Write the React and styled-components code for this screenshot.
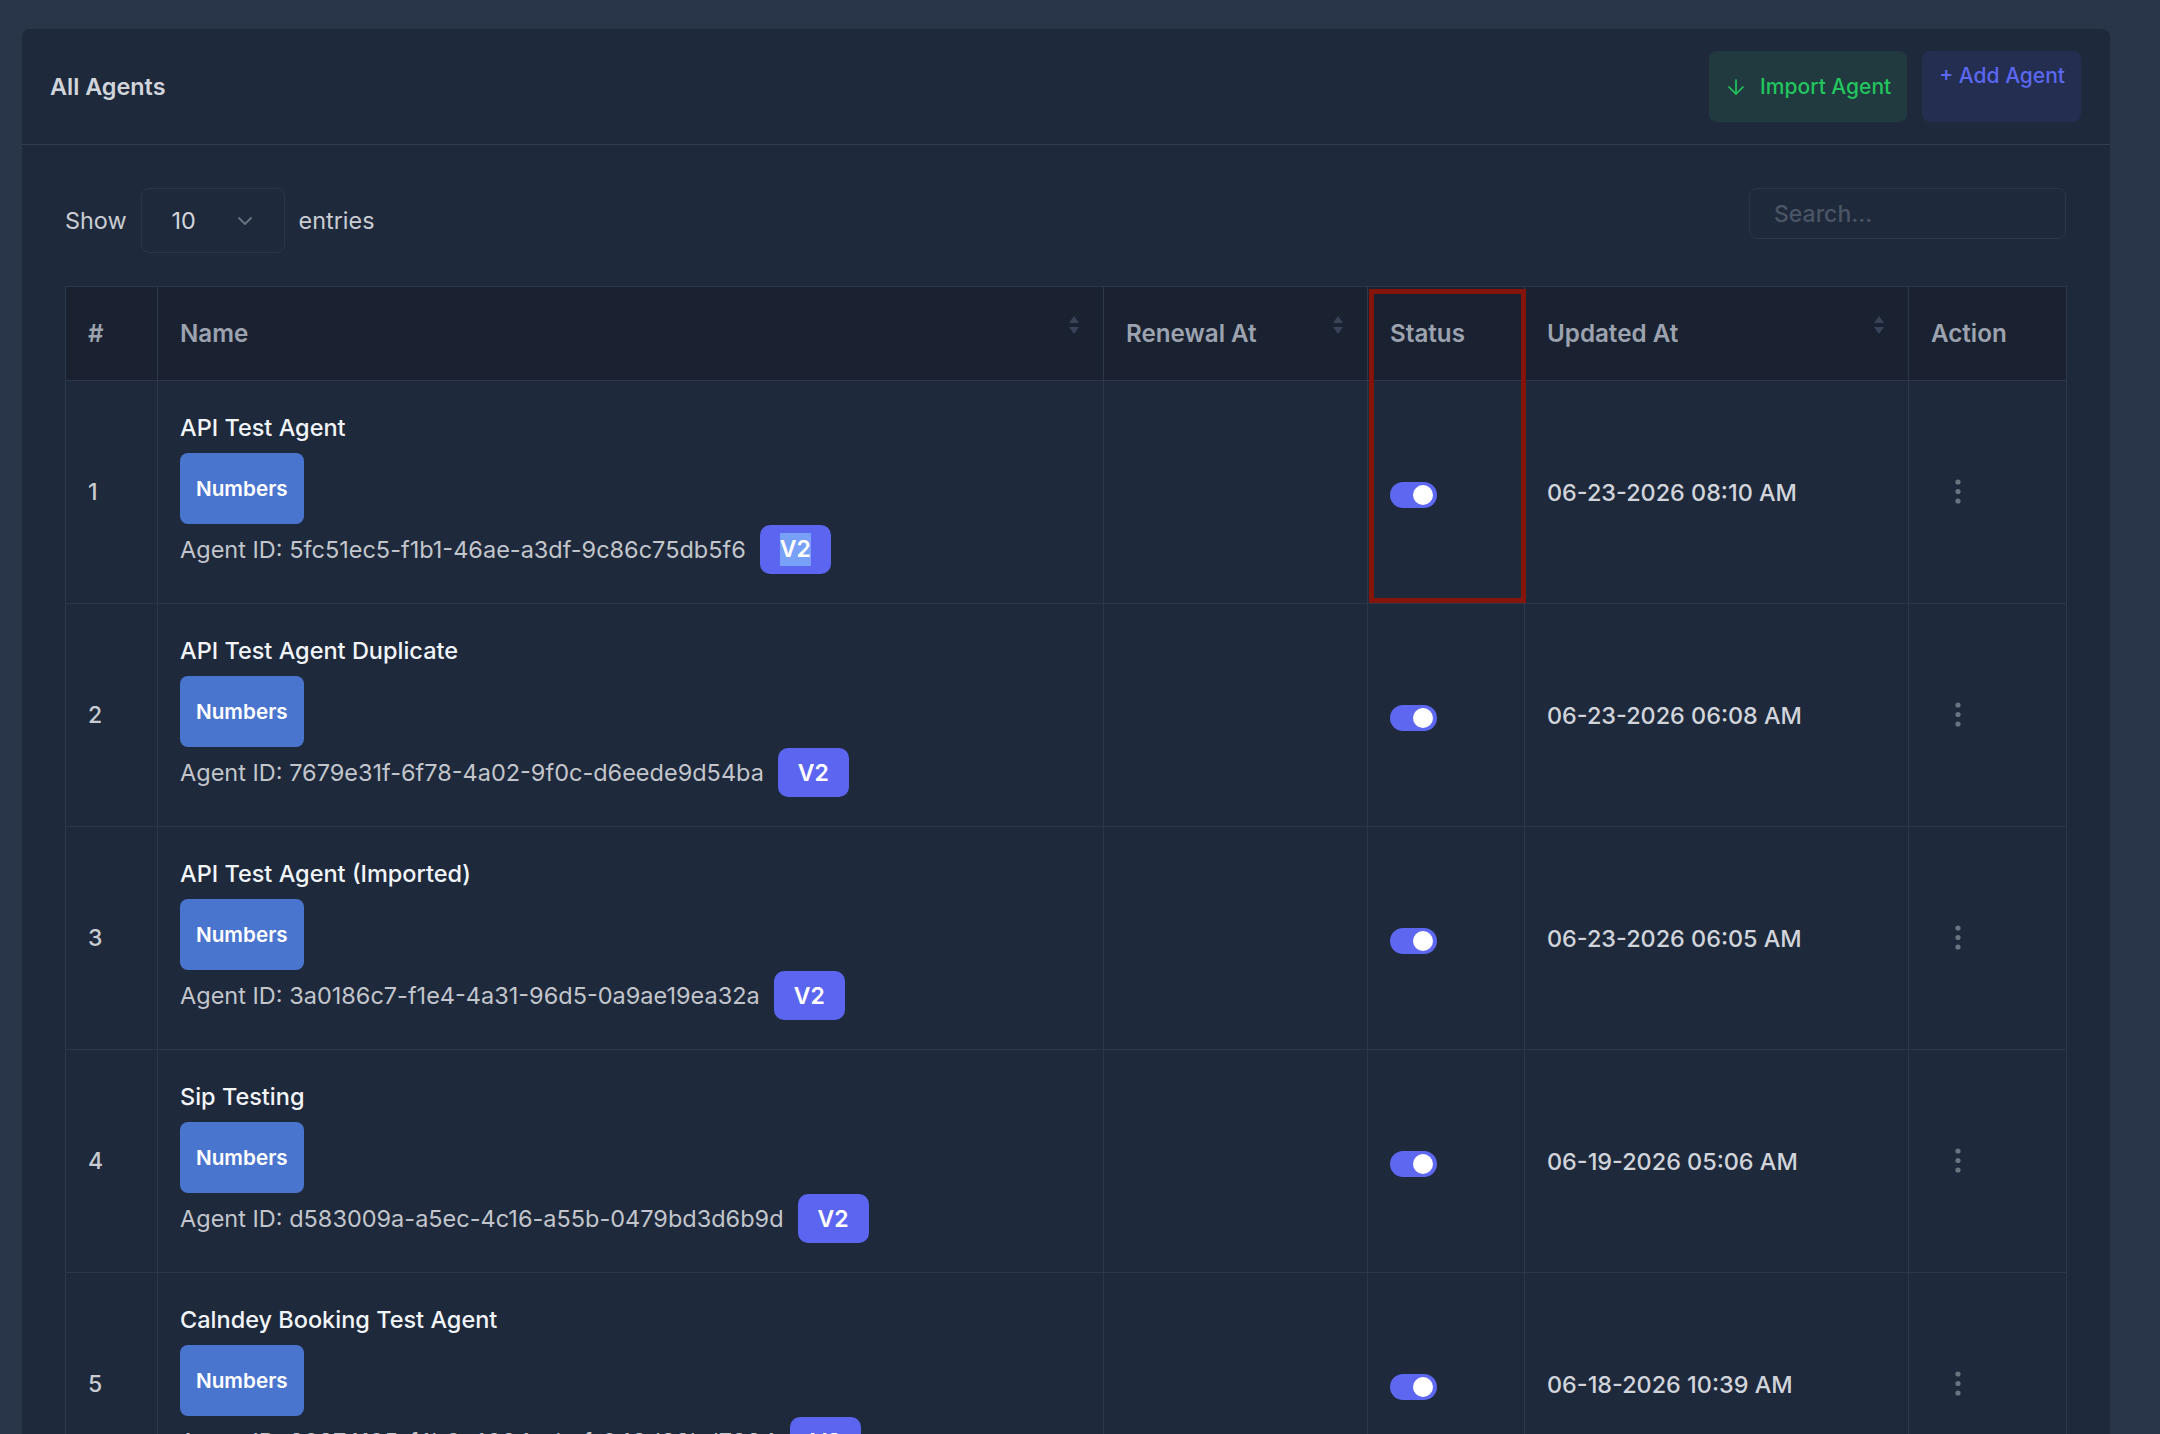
import React from 'react';
import styled, { createGlobalStyle } from 'styled-components';
import { ArrowDown } from 'lucide-react';

const Global = createGlobalStyle`
  html, body { margin: 0; padding: 0; background: #293548; }
  body { font-family: Inter, "Noto Sans", sans-serif; -webkit-font-smoothing: antialiased; }
  * { box-sizing: border-box; }
`;

const Page = styled.div`
  min-height: 100vh;
  padding: 29px 50px 0 22px;
  overflow: hidden;
`;

const Card = styled.section`
  background: #1e293b;
  border-radius: 8px 8px 0 0;
  min-height: 1500px;
`;

const CardHeader = styled.header`
  display: flex;
  align-items: stretch;
  justify-content: space-between;
  padding: 22px 29px 22px 28px;
  border-bottom: 1px solid #323d50;
`;

const Title = styled.h2`
  margin: 0;
  align-self: center;
  font-size: 23.4px;
  font-weight: 600;
  color: #d1d5db;
`;

const Actions = styled.div`
  display: flex;
  align-items: stretch;
  gap: 15px;
`;

const ActionButton = styled.button`
  display: flex;
  align-items: ${(p) => (p.$top ? 'flex-start' : 'center')};
  gap: 12px;
  border: 0;
  border-radius: 8px;
  font-family: inherit;
  font-size: 21px;
  font-weight: 500;
  line-height: 33px;
  padding: ${(p) => (p.$top ? '8px 16px 0 17px' : '19px 16px 19px 15px')};
  background: ${(p) => p.$bg};
  color: ${(p) => p.$fg};
  cursor: pointer;
`;

const Body = styled.div`
  padding: 43px 44px 0 43px;
`;

const Toolbar = styled.div`
  display: flex;
  align-items: flex-start;
  justify-content: space-between;
  margin-bottom: 33px;
`;

const Length = styled.label`
  display: flex;
  align-items: center;
  gap: 14px;
  font-size: 23.4px;
  color: #c9cdd3;
`;

const Select = styled.div`
  width: 144px;
  height: 65px;
  display: flex;
  align-items: center;
  justify-content: space-between;
  padding: 0 31px 0 30px;
  border: 1px solid #2b3648;
  border-radius: 8px;
  color: #d1d5db;
  font-size: 23.4px;
`;

const Search = styled.input`
  width: 317px;
  height: 51px;
  padding: 0 24px;
  background: transparent;
  border: 1px solid #2b3648;
  border-radius: 8px;
  font-family: inherit;
  font-size: 23px;
  font-weight: 500;
  color: #d1d5db;
  outline: none;
  &::placeholder { color: #4b5565; }
`;

const TableWrap = styled.div`
  position: relative;
`;

const Table = styled.table`
  width: 100%;
  border-collapse: collapse;
  table-layout: fixed;
  border: 1px solid #2c3849;
`;

const Th = styled.th`
  height: 94px;
  padding: 0 22px;
  text-align: left;
  background: #1a2232;
  border: 1px solid #2c3849;
  font-size: 24.2px;
  font-weight: 600;
  color: #9ca3af;
`;

const ThInner = styled.div`
  display: flex;
  align-items: center;
  justify-content: space-between;
`;

const SortIcon = styled.svg`
  margin-bottom: 17px;
  margin-right: 1px;
  flex: none;
`;

const Td = styled.td`
  height: 223px;
  padding: 0 22px;
  border: 1px solid #2c3849;
  vertical-align: ${(p) => (p.$top ? 'top' : 'middle')};
  padding-top: ${(p) => (p.$top ? '33px' : '0')};
  font-size: ${(p) => p.$size || '23px'};
  color: ${(p) => p.$color || '#c8ccd2'};
  font-weight: ${(p) => p.$weight || 400};
`;

const AgentName = styled.div`
  font-size: 23.5px;
  line-height: 28px;
  font-weight: 500;
  color: #f1f5f9;
  margin-bottom: 11px;
`;

const NumbersBadge = styled.span`
  display: inline-flex;
  align-items: center;
  height: 71px;
  padding: 0 16px;
  border-radius: 8px;
  background: #4a75cf;
  color: #ffffff;
  font-size: 20.7px;
  font-weight: 600;
`;

const IdRow = styled.div`
  display: flex;
  align-items: center;
  gap: 14px;
  margin-top: 1px;
  font-size: 23.5px;
  color: #c2c6cc;
`;

const VersionBadge = styled.span`
  display: inline-flex;
  align-items: center;
  justify-content: center;
  min-width: 71px;
  height: 49px;
  padding: 0 14px;
  border-radius: 10px;
  background: #5b65f0;
  color: #ffffff;
  font-size: 23px;
  font-weight: 600;
`;

const Selected = styled.span`
  background: #78a0f7;
  padding: 2px 0 3px;
`;

const Toggle = styled.span`
  display: block;
  position: relative;
  width: 47px;
  height: 26px;
  margin-top: 6px;
  border-radius: 13px;
  background: #5d67f0;
  &::after {
    content: '';
    position: absolute;
    top: 3px;
    right: 4px;
    width: 20px;
    height: 20px;
    border-radius: 50%;
    background: #ffffff;
  }
`;

const DotsButton = styled.button`
  display: flex;
  align-items: center;
  justify-content: center;
  width: 54px;
  height: 40px;
  padding: 0;
  background: transparent;
  border: 0;
  cursor: pointer;
`;

const Annotation = styled.div`
  position: absolute;
  left: 1304px;
  top: 3px;
  width: 157px;
  height: 314px;
  border: 5px solid #85140b;
  pointer-events: none;
`;

const Sort = () => (
  <SortIcon width="12" height="20" viewBox="0 0 12 20">
    <path d="M6 1 L11 8 H1 Z" fill="#384357" />
    <path d="M6 19 L11 12 H1 Z" fill="#384357" />
  </SortIcon>
);

const Dots = () => (
  <svg width="6" height="26" viewBox="0 0 6 26">
    <circle cx="3" cy="3" r="2.6" fill="#6b7280" />
    <circle cx="3" cy="12.5" r="2.6" fill="#6b7280" />
    <circle cx="3" cy="22" r="2.6" fill="#6b7280" />
  </svg>
);

const Chevron = () => (
  <svg width="16" height="10" viewBox="0 0 16 10" fill="none">
    <path d="M2 2 L8 8 L14 2" stroke="#6b7280" strokeWidth="1.8" strokeLinecap="round" strokeLinejoin="round" />
  </svg>
);

const rows = [
  { n: 1, name: 'API Test Agent', id: '5fc51ec5-f1b1-46ae-a3df-9c86c75db5f6', date: '06-23-2026 08:10 AM', selected: true },
  { n: 2, name: 'API Test Agent Duplicate', id: '7679e31f-6f78-4a02-9f0c-d6eede9d54ba', date: '06-23-2026 06:08 AM' },
  { n: 3, name: 'API Test Agent (Imported)', id: '3a0186c7-f1e4-4a31-96d5-0a9ae19ea32a', date: '06-23-2026 06:05 AM' },
  { n: 4, name: 'Sip Testing', id: 'd583009a-a5ec-4c16-a55b-0479bd3d6b9d', date: '06-19-2026 05:06 AM' },
  { n: 5, name: 'Calndey Booking Test Agent', id: '80874105-f4b0-4094-abcf-048d88bd7084', date: '06-18-2026 10:39 AM' },
];

export default function App() {
  return (
    <Page>
      <Global />
      <Card>
        <CardHeader>
          <Title>All Agents</Title>
          <Actions>
            <ActionButton $bg="#203a3f" $fg="#22c55e">
              <ArrowDown size={24} strokeWidth={1.7} />
              Import Agent
            </ActionButton>
            <ActionButton $top $bg="#232e50" $fg="#5c67f2">
              + Add Agent
            </ActionButton>
          </Actions>
        </CardHeader>
        <Body>
          <Toolbar>
            <Length>
              Show
              <Select>
                <span>10</span>
                <Chevron />
              </Select>
              entries
            </Length>
            <Search placeholder="Search..." />
          </Toolbar>
          <TableWrap>
            <Table>
              <colgroup>
                <col style={{ width: 92 }} />
                <col style={{ width: 946 }} />
                <col style={{ width: 264 }} />
                <col style={{ width: 157 }} />
                <col style={{ width: 384 }} />
                <col style={{ width: 158 }} />
              </colgroup>
              <thead>
                <tr>
                  <Th>#</Th>
                  <Th><ThInner>Name<Sort /></ThInner></Th>
                  <Th><ThInner>Renewal At<Sort /></ThInner></Th>
                  <Th>Status</Th>
                  <Th><ThInner>Updated At<Sort /></ThInner></Th>
                  <Th>Action</Th>
                </tr>
              </thead>
              <tbody>
                {rows.map((r) => (
                  <tr key={r.n}>
                    <Td $weight={500}>{r.n}</Td>
                    <Td $top>
                      <AgentName>{r.name}</AgentName>
                      <NumbersBadge>Numbers</NumbersBadge>
                      <IdRow>
                        <span>Agent ID: {r.id}</span>
                        <VersionBadge>{r.selected ? <Selected>V2</Selected> : 'V2'}</VersionBadge>
                      </IdRow>
                    </Td>
                    <Td />
                    <Td><Toggle /></Td>
                    <Td $weight={500} $size="23.4px" $color="#d1d5db">{r.date}</Td>
                    <Td><DotsButton><Dots /></DotsButton></Td>
                  </tr>
                ))}
              </tbody>
            </Table>
            <Annotation />
          </TableWrap>
        </Body>
      </Card>
    </Page>
  );
}
